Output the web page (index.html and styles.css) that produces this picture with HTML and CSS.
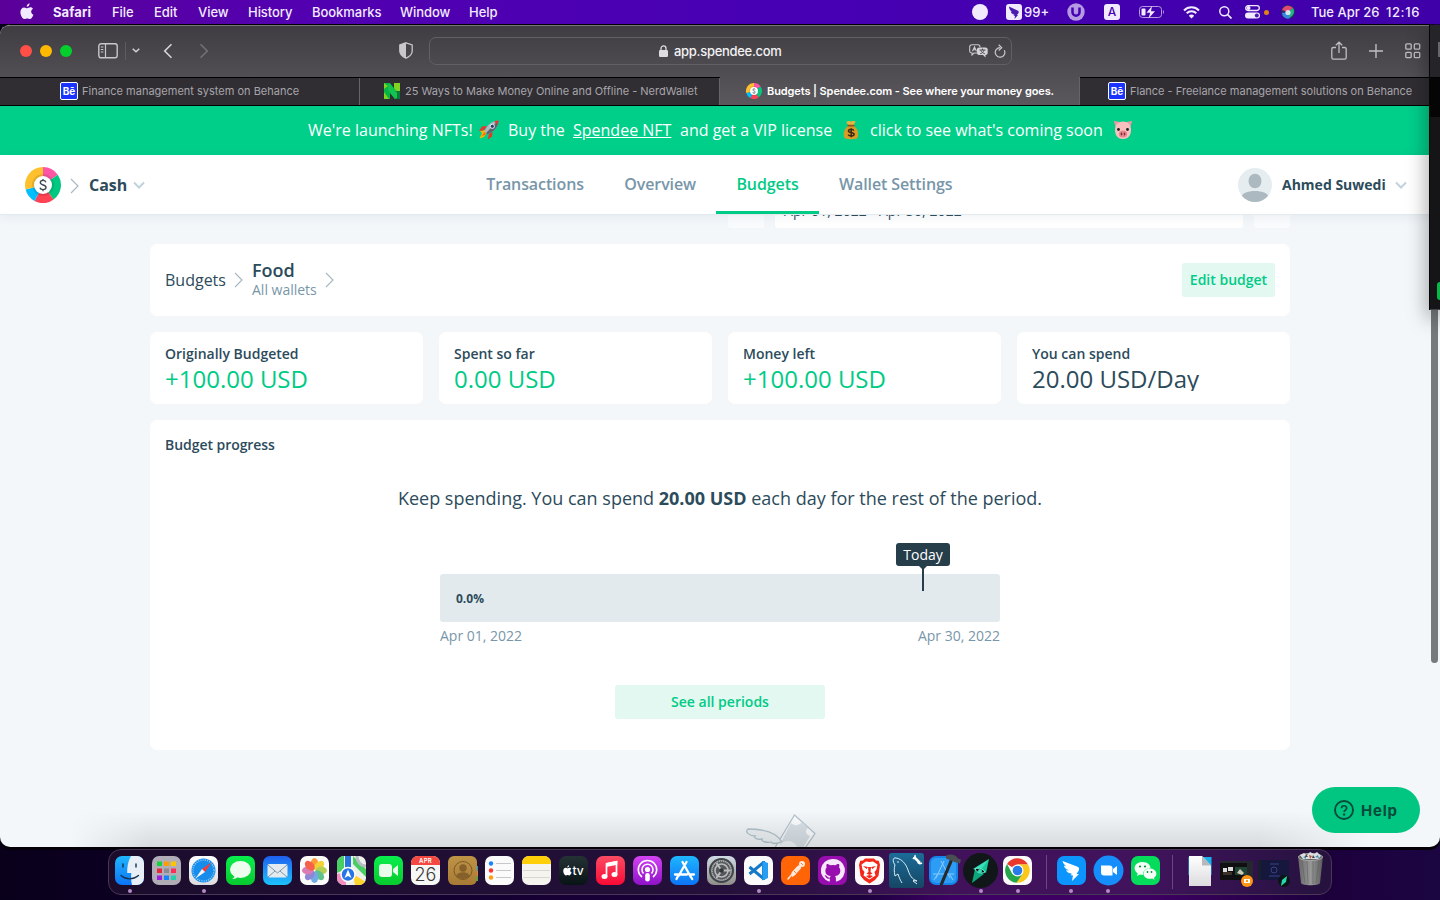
FILE: index.html
```html
<!DOCTYPE html>
<html lang="en">
<head>
<meta charset="utf-8">
<title>Budgets | Spendee.com</title>
<link rel="stylesheet" href="styles.css">
</head>
<body>
<svg class="defs" width="0" height="0">
  <defs>
    <symbol id="wheel" viewBox="0 0 36 36">
      <path fill="#ff55a5" d="M18 18V0A18 18 0 0 1 32.8 7.8Z"/>
      <path fill="#00c880" d="M18 18 32.8 7.8A18 18 0 0 1 28.6 32.5Z"/>
      <path fill="#ff4254" d="M18 18 28.6 32.5A18 18 0 0 1 9.5 33.9Z"/>
      <path fill="#00bfff" d="M18 18 9.5 33.9A18 18 0 0 1 .6 22.5Z"/>
      <path fill="#ffc02e" d="M18 18 .6 22.5A18 18 0 0 1 18 0Z"/>
      <circle cx="18" cy="18" r="11" fill="#000" opacity=".1"/>
      <circle cx="18" cy="18" r="9" fill="#fff"/>
      <path d="M20.800 15.200c-.4-1.200-1.500-1.800-2.800-1.800-1.500 0-2.700.8-2.700 2.200 0 3.200 5.700 1.600 5.700 4.700 0 1.600-1.400 2.300-3 2.300-1.500 0-2.700-.7-3.100-1.900M18 12V13.500M18 22.500V24.200" fill="none" stroke="#3b4a54" stroke-width="1.400"/>
    </symbol>
    <symbol id="chev" viewBox="0 0 9 16"><path d="M1 1l7 7-7 7" fill="none" stroke="#a9b8c0" stroke-width="1.200"/></symbol>
    <symbol id="down" viewBox="0 0 12 8"><path d="M1 1.500l5 5 5-5" fill="none" stroke="#bfd2de" stroke-width="2"/></symbol>
    <symbol id="apple" viewBox="0 0 14 17"><path d="M9.600.3c.1 1.800-1.200 3.400-2.900 3.500C6.500 2.200 8 .5 9.600.3ZM12.900 5.800c-2.500 1.500-2.100 4.900.5 6-.6 1.800-2 4.300-3.500 4.300-1.100 0-1.400-.7-2.700-.7s-1.700.7-2.700.7C2.500 16 .4 12.400.4 9.300c0-3.100 1.900-4.900 3.800-4.900 1.200 0 2.200.8 3 .8.7 0 1.900-.9 3.300-.9 1 0 1.900.5 2.400 1.500Z"/></symbol>
    <linearGradient id="gBlue" x2="0" y2="1"><stop stop-color="#1fb6ff"/><stop offset="1" stop-color="#0c74f5"/></linearGradient>
    <linearGradient id="gMail" x2="0" y2="1"><stop stop-color="#1f5ff0"/><stop offset="1" stop-color="#1cc3fd"/></linearGradient>
    <linearGradient id="gGreen" x2="0" y2="1"><stop stop-color="#08ef4d"/><stop offset="1" stop-color="#08c92e"/></linearGradient>
    <linearGradient id="gRed" x2="0" y2="1"><stop stop-color="#fb4b63"/><stop offset="1" stop-color="#fa0a35"/></linearGradient>
    <linearGradient id="gPod" x2="0" y2="1"><stop stop-color="#d443f3"/><stop offset="1" stop-color="#8f12c7"/></linearGradient>
    <linearGradient id="gPaper" x2="0" y2="1"><stop stop-color="#fff"/><stop offset="1" stop-color="#dcdcdf"/></linearGradient>
    <linearGradient id="gGear" x2="0" y2="1"><stop stop-color="#cfdbe5"/><stop offset="1" stop-color="#8e8d88"/></linearGradient>
    <linearGradient id="gTan" x2="0" y2="1"><stop stop-color="#bf9346"/><stop offset="1" stop-color="#a77b34"/></linearGradient>
    <linearGradient id="gSql" x2="0" y2="1"><stop stop-color="#1b6c99"/><stop offset="1" stop-color="#154664"/></linearGradient>
    <linearGradient id="gBin" x2="1" y2="0"><stop stop-color="#666"/><stop offset=".5" stop-color="#989898"/><stop offset="1" stop-color="#5a5a5a"/></linearGradient>
  </defs>
</svg>

<div class="desktop">
  <header class="menubar">
    <svg class="apple" width="14" height="17"><use href="#apple"/></svg>
    <nav class="menus">
      <b>Safari</b><span>File</span><span>Edit</span><span>View</span><span>History</span><span>Bookmarks</span><span>Window</span><span>Help</span>
    </nav>
    <div class="status">
      <svg width="16" height="16"><circle cx="8" cy="8" r="8"/></svg>
      <svg width="16" height="16"><rect width="16" height="16" rx="3"/><path fill="#4b1bb0" d="M3 2.500l9 4.200c1 .6.900 1.600.2 2.700L11 11l1 .1-3.500 3.800.5-3-1.500-.5 1-.7C5.500 10 5 8.500 4.800 7.500l1.200.4C4 6.500 3.200 4.700 3 2.500Z"/></svg>
      <span class="count">99+</span>
      <svg width="18" height="18" opacity=".65"><circle cx="9" cy="9" r="8.700"/><path d="M5.500 4.500v4.700a3.500 3.500 0 0 0 7 0V4.500" fill="none" stroke="#4600b4" stroke-width="2.500"/></svg>
      <span class="input-a">A</span>
      <svg width="26" height="14" viewBox="0 0 26 14"><rect x=".5" y="1.500" width="22" height="11" rx="3" fill="none" stroke="#b69be4"/><path d="M24 5v4c1.300-.5 1.300-3.500 0-4Z" fill="#b69be4"/><rect x="2.500" y="3.500" width="4" height="7" rx="1"/><path d="M13 1 7.500 7.800h3.700L9.500 13.500 16 6.200h-4Z"/></svg>
      <svg width="17" height="13" viewBox="0 0 17 13"><path d="M1 4.500a10.500 10.500 0 0 1 15 0M3.700 7.300a6.800 6.800 0 0 1 9.600 0" fill="none" stroke="#f2ebff" stroke-width="2"/><path d="M8.500 12.500 5.800 9.700a4 4 0 0 1 5.400 0Z"/></svg>
      <svg width="13" height="13"><circle cx="5.300" cy="5.300" r="4.500" fill="none" stroke="#f2ebff" stroke-width="1.500"/><path d="M8.500 8.500 12.500 12.500" stroke="#f2ebff" stroke-width="1.700"/></svg>
      <svg width="15" height="14"><rect x=".7" y=".7" width="13.600" height="4.800" rx="2.400" fill="none" stroke="#f2ebff" stroke-width="1.300"/><circle cx="3.500" cy="3.100" r="2"/><rect y="7.500" width="15" height="6" rx="3"/><circle cx="11.800" cy="10.500" r="2" fill="#4b1bb0"/></svg>
      <svg width="5" height="5"><circle cx="2.500" cy="2.500" r="2.500" fill="#e08314"/></svg>
      <svg width="14" height="14"><circle cx="7" cy="7" r="7" fill="#26315f"/><path d="M1 5a6.500 6.500 0 0 1 11-2L7 7Z" fill="#e44972"/><path d="M12 3c2 3 1 8-4 10L7 7Z" fill="#1fb786"/><path d="M1 8c0 4 5 7 8 5L7 7Z" fill="#3a87e0"/><circle cx="7" cy="7.500" r="2.600" fill="#eef4ff" opacity=".85"/></svg>
      <span class="date">Tue Apr 26</span><span class="clock">12:16</span>
    </div>
  </header>

  <main class="window">
    <div class="toolbar">
      <div class="lights"><i class="red"></i><i class="amber"></i><i class="green"></i></div>
      <svg class="side" width="20" height="16"><rect x=".8" y=".8" width="18.400" height="14" rx="2.200" fill="none" stroke="#c9c7cb" stroke-width="1.400"/><path d="M7.500 1v14M2.800 4h2.600M2.800 6.500h2.600M2.800 9h2.600" stroke="#c9c7cb" stroke-width="1.200"/></svg>
      <i class="rule"></i>
      <svg class="tiny-down" width="8" height="5"><path d="M.7.7 4 3.700 7.300.7" fill="none" stroke="#d5d3d7" stroke-width="1.500"/></svg>
      <svg class="back" width="10" height="16"><path d="M8.500 1.200 1.700 8l6.800 6.800" fill="none" stroke="#d5d3d7" stroke-width="1.600"/></svg>
      <svg class="forward" width="10" height="16"><path d="M1.500 1.200 8.300 8l-6.800 6.800" fill="none" stroke="#727076" stroke-width="1.600"/></svg>
      <svg class="shield" width="14" height="17" viewBox="0 0 14 17"><path d="M7 .8 13.200 3v6c0 3.600-3 5.800-6.200 7.200C3.800 14.800.8 12.600.8 9V3Z" fill="none" stroke="#c9c7cb" stroke-width="1.300"/><path d="M7 .8V16.200C3.800 14.800.8 12.600.8 9V3Z" fill="#c9c7cb"/></svg>
      <div class="address">
        <svg class="lock" width="9" height="12"><rect y="5" width="9" height="7" rx="1.200" fill="#dddcdf"/><path d="M2 5.500V3.400a2.500 2.500 0 0 1 5 0v2.100" fill="none" stroke="#dddcdf" stroke-width="1.300"/></svg>
        <span>app.spendee.com</span>
        <svg class="translate" width="20" height="14" viewBox="0 0 20 14"><path d="M8 9H5L3 11V9C1.500 9 .7 8.200.7 7V3C.7 1.700 1.500.8 3 .8h6c1.400 0 2 .9 2 2.200M3.500 7.200 5.500 2.800l2 4.400M4.200 5.800h2.600" fill="none" stroke="#c9c7cb" stroke-width="1.100"/><path fill="#d5d3d7" d="M10 3.500h6.500c1.300 0 2.200.8 2.200 2V9c0 1.300-.9 2-2.200 2v2.500L14 11h-4c-1.200 0-2-.7-2-2V5.500c0-1.200.8-2 2-2Z"/><path d="M10.500 6h6M13.500 4.600V6M11.200 9.700c2-.5 3.300-1.700 3.800-3.600M11.800 6.200c.6 1.700 1.800 2.900 4 3.500" fill="none" stroke="#4e4b51" stroke-width="1"/></svg>
        <svg class="reload" width="12" height="14" viewBox="0 0 12 14"><path d="M10.300 6.200A4.800 4.800 0 1 1 6 3.600M4.700.8 7.700 3.700 4.700 6.500" fill="none" stroke="#c9c7cb" stroke-width="1.200"/></svg>
      </div>
      <svg class="share" width="16" height="20" viewBox="0 0 16 20"><path d="M5 6.500H2.300C1.300 6.500.8 7 .8 8v8.500c0 1 .5 1.600 1.500 1.600h11.400c1 0 1.500-.6 1.500-1.600V8c0-1-.5-1.500-1.500-1.500H11M8 12V1.300M4.800 4.200 8 1.200l3.200 3" fill="none" stroke="#c0bec2" stroke-width="1.300"/></svg>
      <svg class="plus" width="14" height="14"><path d="M7 0v14M0 7h14" stroke="#c0bec2" stroke-width="1.400"/></svg>
      <svg class="tabs-icon" width="16" height="16"><g fill="none" stroke="#c0bec2" stroke-width="1.300"><rect x=".8" y=".8" width="5.400" height="5.400" rx="1"/><rect x="9.300" y=".8" width="5.400" height="5.400" rx="1"/><rect x=".8" y="9.300" width="5.400" height="5.400" rx="1"/><rect x="9.300" y="9.300" width="5.400" height="5.400" rx="1"/></g></svg>
    </div>

    <div class="tabs">
      <div class="tab t1"><span class="be">Bē</span><span>Finance management system on Behance</span></div>
      <div class="tab t2"><svg width="16" height="16"><path fill="#07b344" d="M0 0h6l4 5V0h6v16h-5l-5-6v6H0Z"/><path fill="#7fd321" d="M0 0 4 3 0 6ZM0 16V9l5 7ZM10 0h6v13L10 5Z"/><path fill="#067a38" d="M16 8v8h-5l-1-8Z"/><path fill="#14c24f" d="M4 1h2l7 9v5l-2 1L4 7Z"/></svg><span>25 Ways to Make Money Online and Offline - NerdWallet</span></div>
      <div class="tab t3"><svg width="16" height="16"><use href="#wheel"/></svg><span>Budgets | Spendee.com - See where your money goes.</span></div>
      <div class="tab t4"><span class="be">Bē</span><span>Flance - Freelance management solutions on Behance</span></div>
    </div>

    <div class="banner">
      <span>We're launching NFTs!</span>
      <svg width="20" height="20" viewBox="0 0 20 20"><path fill="#f8b400" d="M6 10 1 11l2 2-2.500 5.500L5 17l2-3Z"/><path fill="#e8372c" d="M8 6 3 6.500 0 11l5-.8ZM13.500 11.500l-.5 5L8.800 19.500l.9-5Z"/><path fill="#ff5a1f" d="M6 12 2.500 16l4-1.500Z"/><path fill="#aeb9c2" d="M5.500 11.500C8 5 12.500 1 19.500.3 19.500 6.500 15.500 11.500 8.500 14.500Z"/><path fill="#59646e" d="M8.500 14.500C15.500 11.500 19.500 6.500 19.500.3L7 13Z"/><path fill="#d33b33" d="M15 1.600C16.500.8 18 .4 19.500.3c0 1.600-.3 3.100-.9 4.500Z"/><circle cx="13.300" cy="6.300" r="2.100" fill="#263d64" stroke="#e9eef2"/></svg>
      <span>Buy the</span>
      <a>Spendee NFT</a>
      <span>and get a VIP license</span>
      <svg width="16" height="20" viewBox="0 0 16 20"><path fill="#d79b28" d="M5 6C1 9 0 13 1.200 17c.5 1.800 2 2.200 6.800 2.200s6.300-.4 6.800-2.200C16 13 15 9 11 6Z"/><path fill="#e8b440" d="M5 5 3 1.500c1.500.8 2.500-1 4-.2 1.500.8 2-1.200 5.500.2L11 5Z"/><path d="M4.500 5.600h7" stroke="#8b541b" stroke-width="1.600"/><path d="M10.800 10.600c-1-1.800-5.300-1.700-5.300.4 0 2.200 5.600 1 5.600 3.300 0 2.200-4.800 2.300-5.900.3M8.200 8.300v9" fill="none" stroke="#3b2a13" stroke-width="1.500"/></svg>
      <span>click to see what's coming soon</span>
      <svg width="20" height="20" viewBox="0 0 20 20"><path fill="#eb9ba5" d="M.8 1 7 2 3 8ZM19.200 1 13 2l4 6Z"/><path fill="#f9c0bf" d="M10 1.500c5 0 8 3.500 8 8.500 0 6-3.500 9-8 9s-8-3-8-9C2 5 5 1.500 10 1.500Z"/><ellipse cx="10" cy="14" rx="4.200" ry="3.600" fill="#e8868f"/><ellipse cx="8.500" cy="14" rx=".8" ry="1.400" fill="#792b3a"/><ellipse cx="11.500" cy="14" rx=".8" ry="1.400" fill="#792b3a"/><circle cx="5.500" cy="9.500" r="1.400" fill="#222"/><circle cx="14.500" cy="9.500" r="1.400" fill="#222"/></svg>
    </div>

    <div class="app-header">
      <svg class="logo" width="36" height="36"><use href="#wheel"/></svg>
      <svg class="crumb" width="9" height="16"><use href="#chev"/></svg>
      <strong class="wallet">Cash</strong>
      <svg width="12" height="8"><use href="#down"/></svg>
      <nav class="nav"><span>Transactions</span><span>Overview</span><span class="active">Budgets</span><span>Wallet Settings</span></nav>
      <svg class="avatar" width="34" height="34"><clipPath id="av"><circle cx="17" cy="17" r="17"/></clipPath><g clip-path="url(#av)"><rect width="34" height="34" fill="#e6edf0"/><ellipse cx="17" cy="13" rx="6.500" ry="7.300" fill="#acb9c1"/><path d="M3 34v-5c2-8 26-8 28 0v5Z" fill="#acb9c1"/></g></svg>
      <strong class="user">Ahmed Suwedi</strong>
      <svg width="12" height="8"><use href="#down"/></svg>
    </div>

    <div class="page">
      <div class="content">
        <div class="period">
          <span class="step"><svg width="6" height="10"><path d="M5 1 1 5l4 4" fill="none" stroke="#8da3b0"/></svg></span>
          <span class="range">Apr 01, 2022 - Apr 30, 2022</span>
          <span class="step"><svg width="6" height="10"><path d="M1 1l4 4-4 4" fill="none" stroke="#8da3b0"/></svg></span>
        </div>
        <section class="card title">
          <span class="root">Budgets</span>
          <svg width="9" height="16"><use href="#chev"/></svg>
          <div class="name"><strong>Food</strong><small>All wallets</small></div>
          <svg width="9" height="16"><use href="#chev"/></svg>
          <button class="btn edit">Edit budget</button>
        </section>
        <section class="stats">
          <div class="card stat"><b>Originally Budgeted</b><span>+100.00 USD</span></div>
          <div class="card stat"><b>Spent so far</b><span>0.00 USD</span></div>
          <div class="card stat"><b>Money left</b><span>+100.00 USD</span></div>
          <div class="card stat plain"><b>You can spend</b><span>20.00 USD/Day</span></div>
        </section>
        <section class="card progress">
          <b class="heading">Budget progress</b>
          <p class="message">Keep spending. You can spend <b>20.00 USD</b> each day for the rest of the period.</p>
          <div class="bar"><b>0.0%</b><span class="today">Today</span></div>
          <div class="ends"><span>Apr 01, 2022</span><span>Apr 30, 2022</span></div>
          <button class="btn all">See all periods</button>
        </section>
      </div>
      <svg class="money" width="72" height="34" viewBox="0 0 72 34"><path d="M49.500 1 70 19.500 56 40 28 37Z" fill="#fbfdfe" stroke="#b3c5cf" stroke-width="1.200"/><path d="M46 9c3 3 8 3 11-1l6 6c-3 3-3 6 2 8l-8 14-24-2Z" fill="#d9e2e8"/><circle cx="43" cy="37" r="10" fill="#f3f7fa"/><path d="M37 28C31 17 17 15 3 15c-4 3 2 7 7 7-2 2 3 4 7 3-1 3 6 4 9 3 1 2 6 2 10 0" fill="#eef3f6" stroke="#b3c5cf" stroke-width="1.300"/></svg>
      <div class="dock-shade"></div>
      <div class="scroll"><i></i></div>
      <button class="help"><svg width="20" height="20"><circle cx="10" cy="10" r="9" fill="none" stroke="#064b3a" stroke-width="1.900"/><path d="M7.500 8.300c0-3.400 5.200-3.300 5.200-.2 0 2-2.600 2.100-2.600 3.900" fill="none" stroke="#064b3a" stroke-width="1.700"/><circle cx="10.100" cy="14.500" r="1.200" fill="#064b3a"/></svg>Help</button>
    </div>
  </main>

  <aside class="neighbor"><i class="nb-top"></i><i class="nb-black"></i><i class="nb-body"><i></i></i></aside>

  <footer class="dock">
    <span class="app run"><svg viewBox="0 0 29 29"><rect width="29" height="29" rx="7" fill="url(#gBlue)"/><path d="M16 0h6a7 7 0 0 1 7 7v15a7 7 0 0 1-7 7h-5c-1-4-1-8-.8-12h-4C12 11 13 5 16 0Z" fill="#e8eff7"/><path d="M8 8v3M21 8v3M6 19.500c5 4.500 12 4.500 17.500 0" fill="none" stroke="#16334f" stroke-width="1.400" stroke-linecap="round"/></svg></span>
    <span class="app"><svg viewBox="0 0 29 29"><rect width="29" height="29" rx="7" fill="#b0adb6"/><g><path fill="#16d33c" d="M5 5.500h5v4.500H5z"/><path fill="#ff9d00" d="M12 5.500h5v4.500h-5z"/><path fill="#ffc400" d="M19 5.500h5v4.500h-5z"/><path fill="#e8273b" d="M5 12.500h5v4.500H5z"/><path fill="#8d8a92" d="M12 12.500h5v4.500h-5z"/><path fill="#ff2c5a" d="M19 12.500h5v4.500h-5z"/><path fill="#9c20df" d="M5 19.500h5v4.500H5z"/><path fill="#1683ff" d="M12 19.500h5v4.500h-5z"/><path fill="#21cfaa" d="M19 19.500h5v4.500h-5z"/></g></svg></span>
    <span class="app run"><svg viewBox="0 0 29 29"><rect width="29" height="29" rx="7" fill="url(#gPaper)"/><circle cx="14.500" cy="14.500" r="12" fill="#168cec"/><circle cx="14.500" cy="14.500" r="10.500" fill="none" stroke="#cfe9ff" stroke-dasharray=".7 1.500" stroke-width="1.500"/><path fill="#ff392f" d="M22.500 6.500 16 16 13 13Z"/><path fill="#f5f5f5" d="M6.500 22.500 16 16 13 13Z"/></svg></span>
    <span class="app"><svg viewBox="0 0 29 29"><rect width="29" height="29" rx="7" fill="url(#gGreen)"/><ellipse cx="14.500" cy="13.500" rx="10.500" ry="8.500" fill="#edfcef"/><path fill="#edfcef" d="M8 18c1 3 0 4-2 5 3 .4 5-1 6-3Z"/></svg></span>
    <span class="app"><svg viewBox="0 0 29 29"><rect width="29" height="29" rx="7" fill="url(#gMail)"/><rect x="4.500" y="8" width="20" height="13.500" rx="1.800" fill="#e3eaf0"/><path d="M5 9l9.500 8L24 9M5 21l7-6M24 21l-7-6" fill="none" stroke="#8297a8"/></svg></span>
    <span class="app"><svg viewBox="0 0 29 29"><rect width="29" height="29" rx="7" fill="#fbfbfb"/><g opacity=".85"><ellipse cx="14.500" cy="7.800" rx="3.900" ry="5.800" fill="#ff8b14"/><ellipse cx="14.500" cy="7.800" rx="3.900" ry="5.800" fill="#f2cc16" transform="rotate(45 14.500 14.500)"/><ellipse cx="14.500" cy="7.800" rx="3.900" ry="5.800" fill="#a8c836" transform="rotate(90 14.500 14.500)"/><ellipse cx="14.500" cy="7.800" rx="3.900" ry="5.800" fill="#43b978" transform="rotate(135 14.500 14.500)"/><ellipse cx="14.500" cy="7.800" rx="3.900" ry="5.800" fill="#5a9ce0" transform="rotate(180 14.500 14.500)"/><ellipse cx="14.500" cy="7.800" rx="3.900" ry="5.800" fill="#7b73cf" transform="rotate(225 14.500 14.500)"/><ellipse cx="14.500" cy="7.800" rx="3.900" ry="5.800" fill="#d565aa" transform="rotate(270 14.500 14.500)"/><ellipse cx="14.500" cy="7.800" rx="3.900" ry="5.800" fill="#f4472c" transform="rotate(315 14.500 14.500)"/></g></svg></span>
    <span class="app"><svg viewBox="0 0 29 29"><clipPath id="mp"><rect width="29" height="29" rx="7"/></clipPath><g clip-path="url(#mp)"><path fill="#eef0ee" d="M0 0h29v29H0z"/><path fill="#47cf61" d="M0 0h7v14L0 17zM16 0l13 13v8L16 8z"/><path fill="#f08ec0" d="M0 18l9-2v13H0z"/><path fill="#ffd52c" d="M16 18l13 8v3H18z"/><path fill="#2675dc" d="M8 0h6v14H8z"/><path d="M20 0c0 6 4 10 9 10" fill="none" stroke="#b7bbc2" stroke-width="3"/></g><circle cx="11" cy="18.500" r="7" fill="#2576e8" stroke="#fff" stroke-width="1.500"/><path fill="#fff" d="M11 13.500l3.500 8.500-3.500-2-3.500 2Z"/></svg></span>
    <span class="app"><svg viewBox="0 0 29 29"><rect width="29" height="29" rx="7" fill="url(#gGreen)"/><rect x="5" y="8" width="13" height="13" rx="3" fill="#e9fbea"/><path fill="#e9fbea" d="M19 13l5-4v11l-5-4Z"/></svg></span>
    <span class="app calendar"><small>APR</small><em>26</em></span>
    <span class="app"><svg viewBox="0 0 29 29"><path fill="#249bd0" d="M26 10h4v6h-4z"/><path fill="#f5812d" d="M26 15h4v5h-4z"/><path fill="#35b84b" d="M26 20h4v5h-4z"/><rect width="29" height="29" rx="6" fill="url(#gTan)"/><circle cx="15" cy="14.500" r="9" fill="none" stroke="#7d5923"/><circle cx="15" cy="12" r="3.700" fill="#85602a"/><path fill="#85602a" d="M8 20c2-5 12-5 14 0-4 4-10 4-14 0Z"/></svg></span>
    <span class="app"><svg viewBox="0 0 29 29"><rect width="29" height="29" rx="7" fill="#fbfbfb"/><g stroke="#c8c8ca"><path d="M11 7.500h15M11 14.500h15M11 21.500h15"/></g><circle cx="6" cy="7.500" r="2.200" fill="#1b82ff"/><circle cx="6" cy="14.500" r="2.200" fill="#ff3131"/><circle cx="6" cy="21.500" r="2.200" fill="#ff9a13"/></svg></span>
    <span class="app"><svg viewBox="0 0 29 29"><rect width="29" height="29" rx="7" fill="#f5f4ef"/><path fill="#ffcf09" d="M7 0h15a7 7 0 0 1 7 7v1H0V7a7 7 0 0 1 7-7Z"/><path d="M1 14.500h27M1 21.500h27" stroke="#d8d7d1"/></svg></span>
    <span class="app tv"><svg width="9" height="10" fill="#fff"><use href="#apple"/></svg>tv</span>
    <span class="app"><svg viewBox="0 0 29 29"><rect width="29" height="29" rx="7" fill="url(#gRed)"/><path d="M10.500 20V8l10-2.200V18" fill="none" stroke="#fff" stroke-width="1.700"/><path fill="#fff" d="M10 7l11.300-2.300v4L10 11z"/><ellipse cx="8.500" cy="20.500" rx="3" ry="2.500" fill="#fff"/><ellipse cx="18.500" cy="18.500" rx="3" ry="2.500" fill="#fff"/></svg></span>
    <span class="app"><svg viewBox="0 0 29 29"><rect width="29" height="29" rx="7" fill="url(#gPod)"/><path d="M9 21a9.200 9.200 0 1 1 11 0M10.500 17.500a5.500 5.500 0 1 1 8 0" fill="none" stroke="#fff" stroke-width="1.600"/><circle cx="14.500" cy="13.500" r="2.600" fill="#fff"/><rect x="12.200" y="17" width="4.600" height="8.500" rx="2.300" fill="#fff"/></svg></span>
    <span class="app"><svg viewBox="0 0 29 29"><rect width="29" height="29" rx="7" fill="url(#gBlue)"/><path d="M16.500 6 8.500 20M12.500 6l8 14.500M5 18.500h12M20 18.500h4M7.500 21l-1 2M21 21l1.200 2" fill="none" stroke="#fff" stroke-width="2.300" stroke-linecap="round"/></svg></span>
    <span class="app"><svg viewBox="0 0 29 29"><rect width="29" height="29" rx="7" fill="url(#gGear)"/><circle cx="14.500" cy="14.500" r="11.500" fill="#8b9094" stroke="#414448" stroke-width="2"/><circle cx="14.500" cy="14.500" r="9.500" fill="#55595d" stroke="#b0b3b5" stroke-dasharray="1 1" stroke-width="1.500"/><circle cx="14.500" cy="14.500" r="6.500" fill="none" stroke="#bbb" stroke-width="1.600"/><path d="M14.500 14.500h9M14.500 14.500l-5-7.500M14.500 14.500l-5 7.500" stroke="#bbb" stroke-width="2"/><circle cx="14.500" cy="14.500" r="2.300" fill="#34373a"/></svg></span>
    <span class="app run"><svg viewBox="0 0 29 29"><rect width="29" height="29" rx="7" fill="#fbfbfb"/><path d="M19.500 5v19M19.500 6.500 5.500 18M19.500 22.500 5.500 11" fill="none" stroke="#1479c9" stroke-width="3"/><path fill="#269ff2" d="M18.500 5 24 7v15l-5.500 2.500Z"/></svg></span>
    <span class="app"><svg viewBox="0 0 29 29"><rect width="29" height="29" rx="7" fill="#ff6506"/><path d="M7 23 13 16" stroke="#ffe9dc" stroke-width="1.600" stroke-linecap="round"/><path d="M12.500 17.500 18 11.500" stroke="#ffe9dc" stroke-width="4.200" stroke-linecap="round"/><path d="M11 20.500 15 17" stroke="#ffe9dc" stroke-width="1.500"/><circle cx="21" cy="8" r="3" fill="#ffe9dc"/><path d="M13 15l2.500 2.500M20 7l2 2" stroke="#ff6506" stroke-width=".8"/></svg></span>
    <span class="app"><svg viewBox="0 0 29 29"><rect width="29" height="29" rx="7" fill="#970dae"/><path fill="#f6e8fa" d="M14.500 3A11.500 11.500 0 0 0 11 25.500c.6.100.8-.3.800-.6v-2.300c-3.200.7-4-1.500-4-1.500-.6-1.300-1.300-1.700-1.300-1.700 1.800-.6 2.700 1.200 2.700 1.200 1 1.600 2.200 1.200 2.800.9.100-.8.500-1.300.8-1.500-5-.6-5.700-3.500-5.300-6.300.1-.9.500-1.700 1.100-2.300-.4-1-.3-2.200.1-3.300 1.300-.1 2.500.6 3.400 1.200a11 11 0 0 1 5.500 0c1-.7 2-1.300 3.400-1.200.4 1.100.5 2.300.1 3.300.6.700 1 1.400 1.100 2.300.4 2.800-.5 5.700-5.200 6.300.6.500.9 1.400.9 2.600V25c0 .3.200.6.800.5A11.500 11.500 0 0 0 14.500 3Z"/></svg></span>
    <span class="app run"><svg viewBox="0 0 29 29"><rect width="29" height="29" rx="7" fill="#fbfbfb"/><path fill="#f52718" d="M10 2.500h9l2 2 2.700.2 1.300 4-1.500 11L20 24l-5.500 3.500L9 24l-3.500-4.300L4 8.700l1.300-4L8 4.500Z"/><path fill="#fff" d="M14.500 6 18 5.500l4.500 3-1 5-2 2.500 1 3.500-6 4-6-4 1-3.500-2-2.500-1-5 4.500-3Z"/><path fill="#f52718" d="M8 10l5 1-1.500 2Zm13 0-5 1 1.500 2ZM13 11h3l-.5 5 2 1.500-3 1.500-3-1.500 2-1.500ZM11 20l3.500-1 3.500 1-3.500 2.500Z"/></svg></span>
    <span class="app mysql"><svg viewBox="0 0 35 35"><rect width="35" height="35" rx="3" fill="url(#gSql)"/><path d="M13 30c-2-3-3-6-4-9L6 23c-1-5-1-8 0-11-3-4-2-8 1-7 6 1 10 6 12 12 2 6 4 9 9 11l-4-.5M24 28l4 3" fill="none" stroke="#dceaf3" stroke-width="1"/><circle cx="9" cy="9" r=".8" fill="#fff"/><path d="m25 4 6 6" stroke="#fff" stroke-width="2.500"/><path d="M24 6c1-1 3-2 2-4M29 9c0 2 2 2 4 1" fill="none" stroke="#fff" stroke-width="1.500"/></svg></span>
    <span class="app"><svg viewBox="0 0 29 29"><rect width="29" height="29" rx="7" fill="#1683e9"/><rect x="2" y="2" width="25" height="25" rx="5" fill="#2c9cf5"/><path d="M15 5 7 22M12 5l9 17M4 18h21M5 24l3-5M24 24l-3-5" fill="none" stroke="#8accff" stroke-width="1"/><path d="M22.500 4 12.500 28" stroke="#26282b" stroke-width="3.200" stroke-linecap="round"/><path d="M17-.500c5-2 10-.5 12 3l3 1-1 4-4-1-10-4Z" fill="#4b4e52"/></svg></span>
    <span class="app run kite"><svg viewBox="0 0 35 35"><circle cx="17.500" cy="17.500" r="17.500" fill="#111719"/><path fill="#16c898" d="M26 6 23 20l-7-4Z"/><path fill="#38dfbb" d="M26 6 10 16l7 2Z"/><path fill="#0ca77d" d="M9 30 12 16l9 5Z"/><path d="M12 16c4-2 8 0 10 3-4 2-8 1-10-3Z" fill="#111719" stroke="#6ff3d4"/><circle cx="17" cy="18" r="2" fill="#38dfbb"/></svg></span>
    <span class="app run"><svg viewBox="0 0 29 29"><rect width="29" height="29" rx="7" fill="#fbfbfb"/><path fill="#e9392d" d="M14.500 14.500 4 8a12.200 12.200 0 0 1 21 .5H14.500Z"/><path fill="#fbc718" d="M14.500 8.500H25a12.200 12.200 0 0 1-11.500 18.200l6.200-9Z"/><path fill="#25a64b" d="M4 8a12.200 12.200 0 0 0 9.500 18.700l6.200-9-10.500 0Z"/><circle cx="14.500" cy="14.500" r="6" fill="#fff"/><circle cx="14.500" cy="14.500" r="4.800" fill="#277bea"/></svg></span>
    <i class="divider"></i>
    <span class="app run"><svg viewBox="0 0 29 29"><rect width="29" height="29" rx="7" fill="#0c94ff"/><path fill="#fff" d="M5.500 5 20 10.500c2.500 1 2.500 2.500 1.500 4.500l-2 3H22L15 25l1-5.500-2.500-.2 1.500-1.500c-3.500-.5-5.500-2-6-3.500l3 .3C8 12.500 7 11 7 9.500l2.500 1C7 8.500 6 7 5.500 5Z"/></svg></span>
    <span class="app run"><svg viewBox="0 0 29 29"><circle cx="14.500" cy="14.500" r="15" fill="#158efc"/><path fill="#fff" d="M7 9.500h8.500c2 0 3 1 3 3v7H10c-2 0-3-1-3-3ZM19 13l4-3v9l-4-3Z"/></svg></span>
    <span class="app"><svg viewBox="0 0 29 29"><rect width="29" height="29" rx="7" fill="#06dc5c"/><path fill="#f6fff7" d="M11.500 6c5 0 8 3 8 6.200-5 0-8 3-7.300 6.500-1.200.1-2.400 0-3.400-.3L6 20l.7-2.600C1 13.500 3.500 6 11.500 6Z"/><path fill="#f6fff7" d="M18.500 12.500c7 0 9 6.500 4.500 9.300l.5 2-2.300-1.200c-5 1-8.700-1.500-8.700-4.800 0-3 2.500-5.300 6-5.300Z"/><g fill="#078d40"><circle cx="9" cy="10.500" r="1.100"/><circle cx="14" cy="10.500" r="1.100"/><circle cx="16.500" cy="16" r=".9"/><circle cx="20.500" cy="16" r=".9"/></g></svg></span>
    <i class="divider second"></i>
    <span class="app"><svg viewBox="0 0 29 29"><path fill="#1ab2ed" d="M3.500 1h23v18h-23z"/><path fill="url(#gPaper)" d="M4 0h13l9 9.500V30H4Z"/><path fill="#b7b8ba" d="M17 0v9.500h9Z"/></svg></span>
    <span class="app"><svg class="wide" viewBox="0 0 33 29"><path fill="#101013" d="M0 5h33v19H0z"/><path fill="#25282c" d="M0 5h33v2H0zM27 7h6v17h-6z"/><path fill="#ddd" d="M3 12h4v4H3zM8 11h5v4H8z"/><path fill="#3c3229" d="M3 16h9v3H3z"/><path fill="#214333" d="M15 11h12v8H15z"/><path fill="#cecab8" d="M17 17l3-4 4 4-2 2Z"/><circle cx="27" cy="25" r="6" fill="#ff9514"/><path d="M24 23h6v4h-6z" fill="#fff"/><circle cx="27" cy="25" r="1.200" fill="#ff9514"/></svg></span>
    <span class="app"><svg class="wide" viewBox="0 0 33 29"><path fill="#15183c" d="M1 4h31v20H1z"/><path fill="#17202b" d="M1 4h3v20H1z"/><circle cx="17" cy="14" r="3" fill="none" stroke="#34438b"/><path d="M13 8h9M12 20h11" stroke="#34438b"/><circle cx="27" cy="25" r="6" fill="#0d1416"/><path fill="#26d6ac" d="M30 20l-1 6-5 4 1-6Z"/></svg></span>
    <span class="app bin"><svg viewBox="0 0 27 34"><path fill="url(#gBin)" d="M1 4h25l-3 27c-.3 3-18.700 3-19 0Z"/><path d="M5 9l3 22M10 9l1 23M16 9v23M22 9l-3 22" stroke="#5f6265" opacity=".6"/><ellipse cx="13.500" cy="5" rx="12" ry="3.500" fill="#5d5f61" stroke="#aaa"/><path fill="#ddd" d="M3 3l4-2 3 2 3-3 4 2 3-2 4 4-3 3H6Z"/><path fill="#3f8fbd" d="M6 5l3-1v3ZM18 5l3-2 1 3Z"/><path fill="#b45a42" d="M12 3l3 1-2 3Z"/><path fill="#444" d="M9 2l2 3H8ZM16 3l2 3h-3Z"/></svg></span>
  </footer>
</div>
</body>
</html>
```
FILE: styles.css
```css
* { box-sizing: border-box; }
body { margin: 0; font-family: "Open Sans", sans-serif; color: #2c4b5b; overflow: hidden; }
svg { display: block; flex: none; }
button { border: 0; font: inherit; }
.defs { position: absolute; }
.desktop {
  width: 1440px; height: 900px; position: relative; overflow: hidden;
  display: flex; flex-direction: column;
  background: linear-gradient(90deg, #09001b, #10002b 20%, #1d003e 60%, #3e0064 66%, #3d0062 80%, #1c003c 92%, #1b0642);
}

/* menu bar */
.menubar {
  height: 24px; flex: none; display: flex; align-items: center; padding-left: 20px; position: relative;
  background: linear-gradient(90deg, #5b0099, #5200b0 20%, #4700b4 55%, #3f00a9);
  color: #f2ebff; fill: #f2ebff; font: 500 13px/24px Inter, sans-serif;
}
.apple { margin-top: -2px; }
.menus { display: grid; grid-template-columns: 59px 42px 44px 50px 64px 88px 69px auto; margin: -1px 0 0 19px; letter-spacing: -.05px; }
.menus b { letter-spacing: .1px; }
.status { margin-left: auto; display: flex; align-items: center; padding-right: 18px; white-space: nowrap; }
.status span { margin-top: -1px; }
.status svg:nth-of-type(2) { margin-left: 18px; }
.status .count { margin-left: 2px; width: 43px; }
.status .input-a { width: 16px; height: 16px; margin: 0 19px 0 19px; border-radius: 3px; background: #f2ebff; color: #4600b0; font-size: 12px; line-height: 16px; text-align: center; }
.status svg:nth-of-type(5) { margin-left: 18px; }
.status svg:nth-of-type(6) { margin-left: 19px; }
.status svg:nth-of-type(7) { margin-left: 13px; }
.status svg:nth-of-type(8) { margin-left: 4px; }
.status svg:nth-of-type(9) { margin: 0 16px 0 12px; }
.date { width: 75px; }
.clock { width: 36px; letter-spacing: .6px; }

/* browser window */
.window { height: 823px; flex: none; border-top: 1px solid #000; border-radius: 10px; overflow: hidden; background: #f3f7fa; display: flex; flex-direction: column; box-shadow: 0 3px 0 #050008; }
.toolbar { height: 53px; flex: none; display: flex; align-items: center; padding: 0 0 2px 20px; border-top: 1px solid #77757a; border-bottom: 1px solid #000; border-radius: 9px 0 0; background: linear-gradient(#403d42, #514e54); }
.lights { display: flex; gap: 8px; width: 78px; }
.lights i { width: 12px; height: 12px; border-radius: 50%; }
.red { background: #ff4f47; } .amber { background: #ffb900; } .green { background: #05cf2c; }
.rule { width: 1px; height: 18px; background: #5e5b61; margin: 0 6px 0 7px; }
.back { margin-left: 23px; } .forward { margin-left: 26px; } .shield { margin: 0 16px 0 190px; }
.address { width: 583px; height: 28px; border: 1px solid #626066; border-radius: 7px; display: flex; align-items: center; padding-left: 229px; color: #f3f2f4; font: 500 13px Inter, sans-serif; }
.address span { width: 108px; margin: 0 187px 0 6px; letter-spacing: -.3px; }
.reload { margin-left: 5px; }
.share { margin-left: 319px; } .plus { margin: 0 22px 0 22px; }
.tabs { height: 28px; flex: none; display: grid; grid-template-columns: repeat(4, 360px); border-bottom: 1px solid #000; background: #302e33; }
.tab { display: flex; align-items: center; gap: 4px; padding-bottom: 1px; border-right: 1px solid #66646a; color: #a7a5aa; font: 400 11px Inter, sans-serif; white-space: nowrap; letter-spacing: 0; }
.t1 { padding-left: 60px; }
.t2 { padding-left: 24px; gap: 5px; }
.t3 { padding: 0 0 0 26px; gap: 5px; background: linear-gradient(#514e54, #5a575d); color: #fff; font-weight: 600; letter-spacing: -.1px; margin-top: -1px; }
.t4 { padding-left: 28px; border: 0; }
.be { width: 18px; height: 18px; border: 1px solid #fff; border-radius: 2px; background: #1b33ff; color: #fff; font: 700 10px/16px Inter, sans-serif; text-align: center; }

/* app */
.banner { height: 49px; flex: none; display: grid; grid-template-columns: 171px 29px 65px 107px 163px 27px 243px 20px; align-items: center; padding: 0 0 2px 308px; background: #00cf8a; color: #fff; font-size: 16px; line-height: 22px; white-space: nowrap; }
.banner a { text-decoration: underline; }
.app-header { height: 60px; flex: none; display: flex; align-items: center; padding-left: 25px; background: #fff; border-bottom: 1px solid #e3ebef; position: relative; z-index: 2; box-shadow: 0 2px 10px rgba(50, 80, 100, .08); }
.logo { margin-right: 9px; }
.wallet { width: 38px; margin: 0 6px 0 10px; font-size: 16px; font-weight: 700; line-height: 22px; }
.crumb { margin-top: 2px; }
.nav { display: flex; margin-left: 321px; align-self: stretch; }
.nav span { padding: 0 20.2px; font-size: 16px; font-weight: 600; line-height: 58px; height: 59px; color: #7896a9; white-space: nowrap; letter-spacing: -.1px; }
.nav .active { color: #00cb86; border-bottom: 3px solid #00cb86; }
.avatar { margin-left: auto; }
.user { width: 104px; margin: 0 9px 0 10px; font-size: 14px; font-weight: 700; white-space: nowrap; }
.user + svg { margin-right: 33px; }
.page { flex: 1; min-height: 0; position: relative; overflow: hidden; }
.content { width: 1140px; margin: -23px 0 0 150px; display: flex; flex-direction: column; gap: 16px; }
.period { display: grid; grid-template-columns: 36px 468px 36px; grid-template-rows: 36px; gap: 11px; height: 36px; justify-content: end; }
.step { display: grid; place-items: center; border-radius: 3px; background: rgba(255,255,255,.55); padding-top: 2px; }
.range { background: #fff; border-radius: 3px; padding: 2px 0 0 9px; font-size: 14px; line-height: 34px; letter-spacing: .07px; }
.card { background: #fff; border-radius: 7px; }
.title { height: 72px; display: flex; align-items: center; padding: 0 15px; }
.root { font-size: 16px; width: 61px; margin-right: 8px; }
.name { display: flex; flex-direction: column; width: 65px; margin: -2px 8px 0 9px; white-space: nowrap; }
.name strong { font-size: 18px; line-height: 22px; font-weight: 600; }
.name small { font-size: 14px; line-height: 18px; color: #7896a9; }
.btn { border-radius: 3px; background: #e2f8f1; color: #00cb86; font-size: 14px; font-weight: 600; height: 34px; padding: 0 0 2px; white-space: nowrap; }
.edit { width: 93px; margin-left: auto; }
.stats { display: grid; grid-template-columns: repeat(4, 273px); gap: 16px; }
.stat { height: 72px; padding: 12px 15px; display: flex; flex-direction: column; white-space: nowrap; }
.stat b { font-size: 14px; font-weight: 600; line-height: 20px; }
.stat span { font-size: 24px; line-height: 29px; color: #00cb86; }
.stat.plain span { height: 27px; overflow: hidden; color: #2c4b5b; }
.progress { height: 330px; display: flex; flex-direction: column; align-items: center; }
.heading { align-self: flex-start; margin: 15px 0 0 15px; font-size: 14px; font-weight: 600; line-height: 20px; letter-spacing: -.05px; }
.message { margin: 31px 0 0; font-size: 18px; line-height: 25px; white-space: nowrap; }
.bar { width: 560px; height: 48px; margin-top: 63px; border-radius: 3px; background: #e2eaed; position: relative; padding-left: 16px; font-size: 12px; line-height: 49px; }
.today { position: absolute; left: 456px; top: -31px; width: 54px; height: 23px; border-radius: 3px; background: #263d4a; color: #fff; font-size: 14px; line-height: 24px; text-align: center; }
.today::before { content: ""; position: absolute; left: 26px; top: 23px; width: 2px; height: 25px; background: #263d4a; }
.today::after { content: ""; position: absolute; left: 23px; top: 23px; border: 4px solid transparent; border-top: 4px solid #263d4a; border-bottom: 0; }
.ends { width: 560px; display: flex; justify-content: space-between; margin-top: 4px; font-size: 14px; line-height: 20px; color: #7896a9; }
.all { width: 210px; margin-top: 39px; }
.money { position: absolute; left: 745px; top: 599px; }
.dock-shade { position: absolute; left: 70px; right: 70px; bottom: 0; height: 36px; background: linear-gradient(transparent, rgba(0, 0, 0, .11)); -webkit-mask: linear-gradient(90deg, transparent, #000 80px calc(100% - 110px), transparent); mask: linear-gradient(90deg, transparent, #000 80px calc(100% - 110px), transparent); }
.scroll { position: absolute; right: 0; top: 0; width: 11px; height: 632px; padding: 0 2px; }
.scroll i { display: block; height: 448px; width: 7px; border-radius: 0 0 4px 4px; background: #777a7d; }
.help { position: absolute; right: 20px; bottom: 14px; width: 108px; height: 46px; border-radius: 23px; background: #00c681; color: #064b3a; display: flex; align-items: center; gap: 7px; padding: 0 0 0 22px; font: 700 15px Inter, sans-serif; letter-spacing: .8px; }

/* second window that peeks in from the right */
.neighbor { position: absolute; z-index: 3; left: 1429px; top: 25px; width: 20px; height: 285px; display: flex; flex-direction: column; box-shadow: -2px 8px 20px rgba(0, 0, 0, .35); background: #151518; border-left: 1px solid #050505; clip-path: inset(0 0 -30px -30px); }
.nb-top { height: 53px; background: #252529; border-bottom: 1px solid #000; padding: 17px 0 0 8px; }
.nb-top::before { content: ""; display: block; width: 2px; height: 15px; background: #68686c; }
.nb-black { height: 39px; background: #050505; }
.nb-body { flex: 1; padding-top: 165px; border-bottom: 1px solid #454549; }
.nb-body i { display: block; width: 10px; height: 18px; margin-left: 7px; border-radius: 3px; background: #08b84b; }

/* dock */
.dock { width: 1224px; height: 46px; flex: none; margin: 2px 0 0 108px; border: 1px solid #4a3755; border-radius: 13px; display: flex; align-items: flex-start; gap: 8px; padding: 6px 0 0 6px; background: linear-gradient(90deg, #1b0c2c, #24103a 50%, #41125b 70%, #40135c 85%, #25123e); position: relative; }
.app { width: 29px; height: 29px; flex: none; position: relative; display: flex; justify-content: center; align-items: center; }
.app svg { width: 29px; height: 29px; overflow: visible; }
.app svg.wide { width: 33px; }
.run::after { content: ""; position: absolute; left: 12.500px; top: 33px; width: 4px; height: 4px; border-radius: 50%; background: #b58bc5; }
.calendar { display: block; overflow: hidden; border-radius: 7px; background: #f7f7f5; text-align: center; color: #39393b; font-family: Inter, sans-serif; }
.calendar small { display: block; height: 9px; background: #f44840; color: #fff; font-size: 6px; font-weight: 600; line-height: 10px; letter-spacing: .3px; }
.calendar em { display: block; font-size: 18px; font-style: normal; font-weight: 300; line-height: 19px; }
.tv { border-radius: 7px; background: linear-gradient(#253235, #081315); color: #fff; font: 500 12px Inter, sans-serif; }
.app.tv svg { width: 9px; height: 11px; }
.app.mysql svg, .app.kite svg { width: 35px; height: 35px; flex: none; }
.app.bin svg { width: 27px; height: 34px; margin-top: -4px; }
.divider { width: 1px; height: 34px; flex: none; background: #6b477d; margin: -1px 2.400px 0 5.500px; }
.divider.second { margin: -1px 4px 0 4.500px; }
```
